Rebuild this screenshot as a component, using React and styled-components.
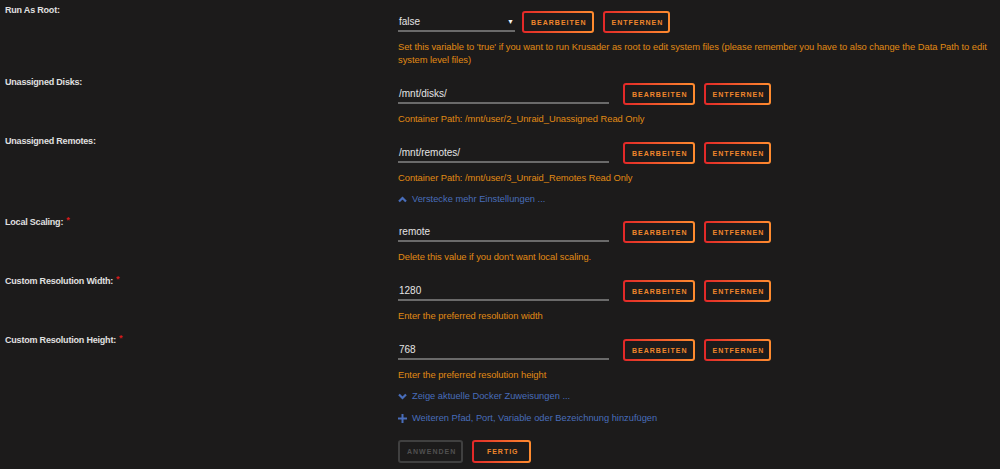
import React from "react";
import styled, { createGlobalStyle } from "styled-components";

const GlobalStyle = createGlobalStyle`
  html, body {
    margin: 0;
    padding: 0;
    background: #1c1b1b;
  }
  body {
    font-family: "Liberation Sans", Arial, sans-serif;
    color: #e4e4e4;
  }
`;

const Page = styled.div`
  width: 1000px;
  height: 469px;
  overflow: hidden;
  padding-top: 4px;
  box-sizing: border-box;
`;

const Field = styled.div`
  display: grid;
  grid-template-columns: 398px 1fr;
  padding-bottom: 10px;
`;

const Label = styled.div`
  padding-left: 5px;
  font-size: 9px;
  font-weight: bold;
  letter-spacing: -0.2px;
  line-height: 12px;
  color: #e0e0e0;
`;

const Required = styled.span`
  color: #d41a1a;
  font-size: 9px;
  margin-left: 3px;
  vertical-align: 2px;
`;

const Content = styled.div`
  display: flex;
  flex-direction: column;
  padding-top: 7px;
`;

const Controls = styled.div`
  display: flex;
  align-items: flex-start;
  height: 22px;
`;

const TextInput = styled.div`
  box-sizing: border-box;
  width: ${(p) => p.$width}px;
  margin-right: ${(p) => p.$gap}px;
  height: 21px;
  padding: 4px 0 0 1px;
  font-size: 10px;
  line-height: 13px;
  color: #e4e4e4;
  border-bottom: 2px solid #6a6a6a;
  display: flex;
  justify-content: space-between;
`;

const Caret = styled.span`
  font-size: 7px;
  color: #f2f2f2;
  padding-right: 1px;
  line-height: 13px;
`;

const Button = styled.button`
  box-sizing: border-box;
  height: ${(p) => (p.$tall ? 23 : 22)}px;
  min-width: ${(p) => p.$min || 0}px;
  margin-right: 9px;
  padding: 0 5px 0 7px;
  border: 2px solid transparent;
  border-radius: 3px;
  background: linear-gradient(#1c1b1b, #1c1b1b) padding-box,
    linear-gradient(to right, #e22828, #ff8c2f) border-box;
  color: #f0862c;
  font-family: "Liberation Sans", Arial, sans-serif;
  font-size: 7px;
  font-weight: bold;
  letter-spacing: 1px;
  text-transform: uppercase;

  &:disabled {
    background: transparent;
    border-color: #404040;
    color: #505050;
  }
`;

const Desc = styled.div`
  margin-top: 7px;
  font-size: 9.4px;
  letter-spacing: -0.05px;
  line-height: 13px;
  color: #e08a14;
`;

const LinkRow = styled.div`
  display: flex;
  align-items: center;
  gap: 5px;
  margin: ${(p) => p.$mt}px 0 ${(p) => p.$mb}px 398px;
  height: 12px;
  font-size: 9.3px;
  line-height: 12px;
  color: #486dba;
`;

const Footer = styled.div`
  display: flex;
  margin-left: 398px;
`;

const ChevronIcon = ({ up }) => (
  <svg width="9" height="7" viewBox="0 0 9 7">
    <polyline
      points={up ? "1,5.5 4.5,2 8,5.5" : "1,1.5 4.5,5 8,1.5"}
      fill="none"
      stroke="#486dba"
      strokeWidth="2.2"
    />
  </svg>
);

const PlusIcon = () => (
  <svg width="9" height="9" viewBox="0 0 9 9">
    <rect x="3.5" y="0" width="2" height="9" fill="#486dba" />
    <rect x="0" y="3.5" width="9" height="2" fill="#486dba" />
  </svg>
);

const fields = [
  {
    label: "Run As Root:",
    value: "false",
    select: true,
    desc: "Set this variable to 'true' if you want to run Krusader as root to edit system files (please remember you have to also change the Data Path to edit system level files)",
  },
  {
    label: "Unassigned Disks:",
    value: "/mnt/disks/",
    desc: "Container Path: /mnt/user/2_Unraid_Unassigned Read Only",
  },
  {
    label: "Unassigned Remotes:",
    value: "/mnt/remotes/",
    desc: "Container Path: /mnt/user/3_Unraid_Remotes Read Only",
  },
];

const advanced = [
  {
    label: "Local Scaling:",
    value: "remote",
    required: true,
    desc: "Delete this value if you don't want local scaling.",
  },
  {
    label: "Custom Resolution Width:",
    value: "1280",
    required: true,
    desc: "Enter the preferred resolution width",
  },
  {
    label: "Custom Resolution Height:",
    value: "768",
    required: true,
    desc: "Enter the preferred resolution height",
  },
];

const FieldRow = ({ field }) => (
  <Field>
    <Label>
      {field.label}
      {field.required && <Required>*</Required>}
    </Label>
    <Content>
      <Controls>
        <TextInput $width={field.select ? 117 : 211} $gap={field.select ? 7 : 14}>
          <span>{field.value}</span>
          {field.select && <Caret>▼</Caret>}
        </TextInput>
        <Button>Bearbeiten</Button>
        <Button>Entfernen</Button>
      </Controls>
      <Desc>{field.desc}</Desc>
    </Content>
  </Field>
);

const App = () => {
  return (
    <Page>
      <GlobalStyle />
      {fields.map((f) => (
        <FieldRow key={f.label} field={f} />
      ))}
      <LinkRow $mt={-1} $mb={9}>
        <ChevronIcon up />
        Verstecke mehr Einstellungen ...
      </LinkRow>
      {advanced.map((f) => (
        <FieldRow key={f.label} field={f} />
      ))}
      <LinkRow $mt={-1} $mb={10}>
        <ChevronIcon />
        Zeige aktuelle Docker Zuweisungen ...
      </LinkRow>
      <LinkRow $mt={0} $mb={16}>
        <PlusIcon />
        Weiteren Pfad, Port, Variable oder Bezeichnung hinzufügen
      </LinkRow>
      <Footer>
        <Button $tall disabled>
          Anwenden
        </Button>
        <Button $tall $min={59}>
          Fertig
        </Button>
      </Footer>
    </Page>
  );
};

export default App;
